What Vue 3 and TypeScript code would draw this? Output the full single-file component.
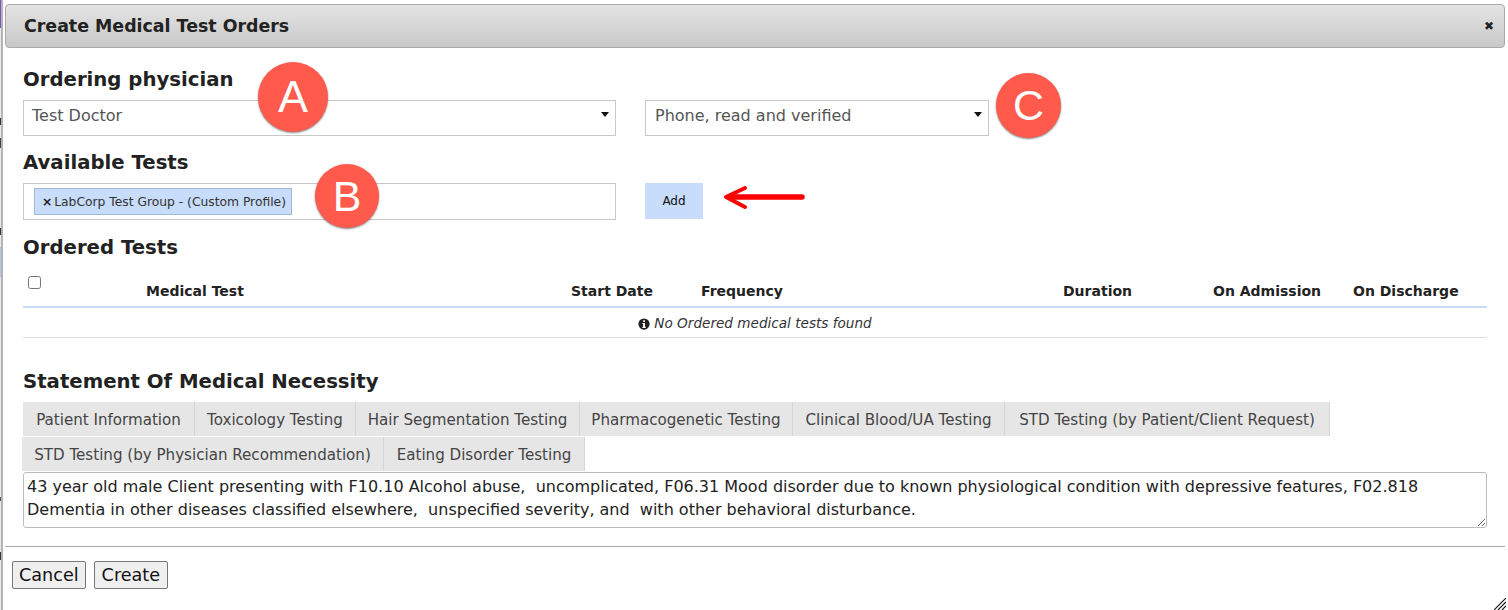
<script setup lang="ts">
const firstTabs = [
  { label: "Patient Information", width: 172 },
  { label: "Toxicology Testing", width: 161 },
  { label: "Hair Segmentation Testing", width: 224 },
  { label: "Pharmacogenetic Testing", width: 213 },
  { label: "Clinical Blood/UA Testing", width: 212 },
  { label: "STD Testing (by Patient/Client Request)", width: 325 },
];
const secondTabs = [
  { label: "STD Testing (by Physician Recommendation)", width: 362 },
  { label: "Eating Disorder Testing", width: 201 },
];
const columns = ["Medical Test", "Start Date", "Frequency", "Duration", "On Admission", "On Discharge"];
const statement =
  "43 year old male Client presenting with F10.10 Alcohol abuse,  uncomplicated, F06.31 Mood disorder due to known physiological condition with depressive features, F02.818 Dementia in other diseases classified elsewhere,  unspecified severity, and  with other behavioral disturbance.";
</script>

<template>
  <div class="page">
    <div class="behind"></div>
    <div class="dialog">
      <header class="titlebar">
        <span class="title">Create Medical Test Orders</span>
        <span class="close">&#10006;</span>
      </header>

      <div class="content">
        <h2 class="first">Ordering physician</h2>
        <div class="row">
          <div class="select wide">
            <span>Test Doctor</span>
            <i class="caret"></i>
          </div>
          <div class="select narrow">
            <span>Phone, read and verified</span>
            <i class="caret"></i>
          </div>
        </div>

        <h2 class="second">Available Tests</h2>
        <div class="row">
          <div class="multi wide">
            <span class="chip"><b>&times;</b> LabCorp Test Group - (Custom Profile)</span>
          </div>
          <button class="add">Add</button>
        </div>

        <h2 class="third">Ordered Tests</h2>
        <table class="orders">
          <colgroup>
            <col class="c0" /><col class="c1" /><col class="c2" /><col class="c3" />
            <col class="c4" /><col class="c5" /><col class="c6" />
          </colgroup>
          <thead>
            <tr>
              <th class="check"><input type="checkbox" /></th>
              <th v-for="c in columns" :key="c">{{ c }}</th>
            </tr>
          </thead>
          <tbody>
            <tr>
              <td colspan="7">
                <svg class="info" viewBox="0 0 16 16" width="12" height="12">
                  <circle cx="8" cy="8" r="7.5" fill="#222" />
                  <rect x="6.9" y="3" width="2.4" height="2.3" fill="#fff" />
                  <path d="M5.8 6.6h3.5v5.2h1v1.4H5.8v-1.4h1V8H5.8z" fill="#fff" />
                </svg>
                <em>No Ordered medical tests found</em>
              </td>
            </tr>
          </tbody>
        </table>

        <h2 class="fourth">Statement Of Medical Necessity</h2>
        <div class="tabs">
          <div class="tabrow">
            <span v-for="t in firstTabs" :key="t.label" class="tab" :style="{ width: t.width + 'px' }">{{ t.label }}</span>
          </div>
          <div class="tabrow shifted">
            <span v-for="t in secondTabs" :key="t.label" class="tab" :style="{ width: t.width + 'px' }">{{ t.label }}</span>
          </div>
        </div>
        <textarea class="statement" :value="statement" spellcheck="false"></textarea>
      </div>

      <footer class="actions">
        <button class="plain">Cancel</button>
        <button class="plain">Create</button>
      </footer>

      <svg class="grip" viewBox="0 0 12 12" width="12" height="12">
        <path d="M0 12L12 0M4 12L12 4M8 12L12 8" stroke="#111" stroke-width="1.1" fill="none" />
      </svg>
    </div>

    <span class="badge a">A</span>
    <span class="badge b">B</span>
    <span class="badge c">C</span>
    <svg class="arrow" viewBox="0 0 84 30" width="84" height="30">
      <path d="M80 15H8" stroke="#fe0000" stroke-width="5.5" stroke-linecap="round" fill="none" />
      <path d="M23 6L4 15L23 25" stroke="#fe0000" stroke-width="4" stroke-linecap="round" stroke-linejoin="round" fill="none" />
    </svg>
  </div>
</template>

<style>
html,
body {
  margin: 0;
  background: #fff;
  overflow: hidden;
}
</style>

<style scoped>
.page {
  position: relative;
  height: 610px;
  width: 1508px;
  font-family: "DejaVu Sans", Verdana, sans-serif;
  color: #222;
  overflow: hidden;
}
/* sliver of the page underneath the dialog */
.behind {
  position: absolute;
  left: 0;
  top: 0;
  width: 1px;
  height: 610px;
  background: linear-gradient(
    #7a4fd0 0 28px,
    #e8e8e8 28px 118px,
    #333 118px 125px,
    #e8e8e8 125px 138px,
    #444 138px 148px,
    #e8e8e8 148px 228px,
    #333 228px 235px,
    #e8e8e8 235px 247px,
    #b4c8e6 247px 277px,
    #e8e8e8 277px 497px,
    #555 497px 501px,
    #e8e8e8 501px 552px,
    #333 552px 560px,
    #e8e8e8 560px
  );
}
.dialog {
  position: relative;
  height: 606px;
  padding-top: 4px;
  margin-left: 1px;
  border-left: 2px solid #b4b4b4;
}
.titlebar {
  margin-left: 2px;
  height: 42px;
  border: 1px solid #aaa;
  border-radius: 4px;
  background: linear-gradient(#e4e4e4, #c8c8c8);
  display: flex;
  align-items: center;
  justify-content: space-between;
  padding: 0 10px 0 18px;
  width: 1470px;
}
.title {
  font-size: 17.4px;
  font-weight: bold;
}
.close {
  font-size: 12px;
  color: #222;
}
.content {
  padding: 0 18px 0 20px;
}
h2 {
  margin: 0;
  font-size: 19.7px;
  line-height: 24px;
  font-weight: bold;
  color: #222;
}
h2.first {
  padding-top: 20px;
}
h2.second {
  padding-top: 15px;
  padding-bottom: 8px;
}
h2.third {
  padding-top: 16px;
}
h2.fourth {
  padding-top: 32px;
  padding-bottom: 8px;
}
.row {
  display: flex;
  gap: 29px;
  align-items: flex-start;
}
h2.first + .row {
  margin-top: 8px;
}
.select {
  box-sizing: border-box;
  height: 36px;
  border: 1px solid #c8c8c8;
  display: flex;
  align-items: center;
  justify-content: space-between;
  font-size: 16px;
  color: #555;
  padding: 0 6px 6px 8px;
}
.wide {
  width: 593px;
}
.narrow {
  width: 344px;
  padding-left: 9px;
}
.caret {
  width: 0;
  height: 0;
  border-left: 4px solid transparent;
  border-right: 4px solid transparent;
  border-top: 5px solid #111;
  margin-bottom: 1px;
}
.multi {
  box-sizing: border-box;
  height: 37px;
  border: 1px solid #c8c8c8;
  padding: 4px 10px;
}
.chip {
  display: inline-block;
  box-sizing: border-box;
  width: 258px;
  height: 27px;
  line-height: 27px;
  background: #c8dcfb;
  border: 1px solid #a4b8d6;
  font-size: 12.3px;
  color: #333;
  padding-left: 7px;
  white-space: nowrap;
}
.chip b {
  color: #222;
  margin-right: -2px;
}
.add {
  width: 58px;
  height: 36px;
  border: 0;
  background: #c8dcfb;
  color: #111;
  font-family: inherit;
  font-size: 12px;
  padding: 0;
}
.orders {
  width: 1464px;
  border-collapse: collapse;
  table-layout: fixed;
  margin-top: 4px;
}
.c0 { width: 123px; }
.c1 { width: 425px; }
.c2 { width: 130px; }
.c3 { width: 362px; }
.c4 { width: 150px; }
.c5 { width: 140px; }
.c6 { width: 134px; }
.orders th {
  text-align: left;
  font-size: 14px;
  font-weight: bold;
  padding: 0;
  height: 43px;
  box-sizing: border-box;
  padding-top: 12px;
  border-bottom: 2px solid #c8dcfb;
  color: #222;
}
.orders th.check {
  vertical-align: top;
  padding-top: 0;
}
.check input {
  margin: 12px 0 0 5px;
  width: 13px;
  height: 13px;
}
.orders td {
  height: 30px;
  padding: 2px 0 0;
  box-sizing: border-box;
  text-align: center;
  font-size: 13.6px;
  border-bottom: 1px solid #d8dde6;
  color: #333;
}
.info {
  vertical-align: -1.5px;
  margin-right: 4px;
}
.tabs {
  display: flex;
  flex-direction: column;
}
.tabrow {
  display: flex;
  height: 35px;
}
.shifted {
  margin-left: -1px;
}
.tab {
  box-sizing: border-box;
  height: 34px;
  line-height: 36px;
  background: #e6e6e6;
  border-right: 1px solid #d6d6d6;
  font-size: 15.1px;
  color: #444;
  text-align: center;
  white-space: nowrap;
}
.statement {
  display: block;
  box-sizing: border-box;
  width: 1464px;
  height: 56px;
  margin: 0;
  padding: 2px 3px;
  border: 1px solid #bbb;
  border-radius: 3px;
  font-family: inherit;
  font-size: 16px;
  line-height: 23px;
  color: #222;
}
.actions {
  margin-top: 18px;
  margin-left: 2px;
  width: 1493px;
  border-top: 1px solid #aaa;
  padding: 14px 0 0 7px;
  display: flex;
  gap: 8px;
}
.plain {
  height: 28px;
  padding: 1px 6px 0;
  background: #efefef;
  border: 1px solid #777;
  border-radius: 2px;
  font-family: inherit;
  font-size: 17.6px;
  color: #111;
}
.plain:last-child {
  padding: 1px 7px 0;
}
.grip {
  position: absolute;
  right: 2px;
  bottom: 0;
}
.badge {
  position: absolute;
  border-radius: 50%;
  background: #ff5a4c;
  color: #fff;
  font-family: "Liberation Sans", Arial, sans-serif;
  display: flex;
  align-items: center;
  justify-content: center;
  box-shadow: 0 1px 2px rgba(0, 0, 0, 0.5);
}
.a {
  left: 258px;
  top: 62px;
  width: 70px;
  height: 70px;
  font-size: 45px;
}
.b {
  left: 315px;
  top: 164px;
  width: 64px;
  height: 64px;
  font-size: 43px;
}
.c {
  left: 996px;
  top: 73px;
  width: 65px;
  height: 65px;
  font-size: 43px;
}
.arrow {
  position: absolute;
  left: 722px;
  top: 182px;
}
</style>
